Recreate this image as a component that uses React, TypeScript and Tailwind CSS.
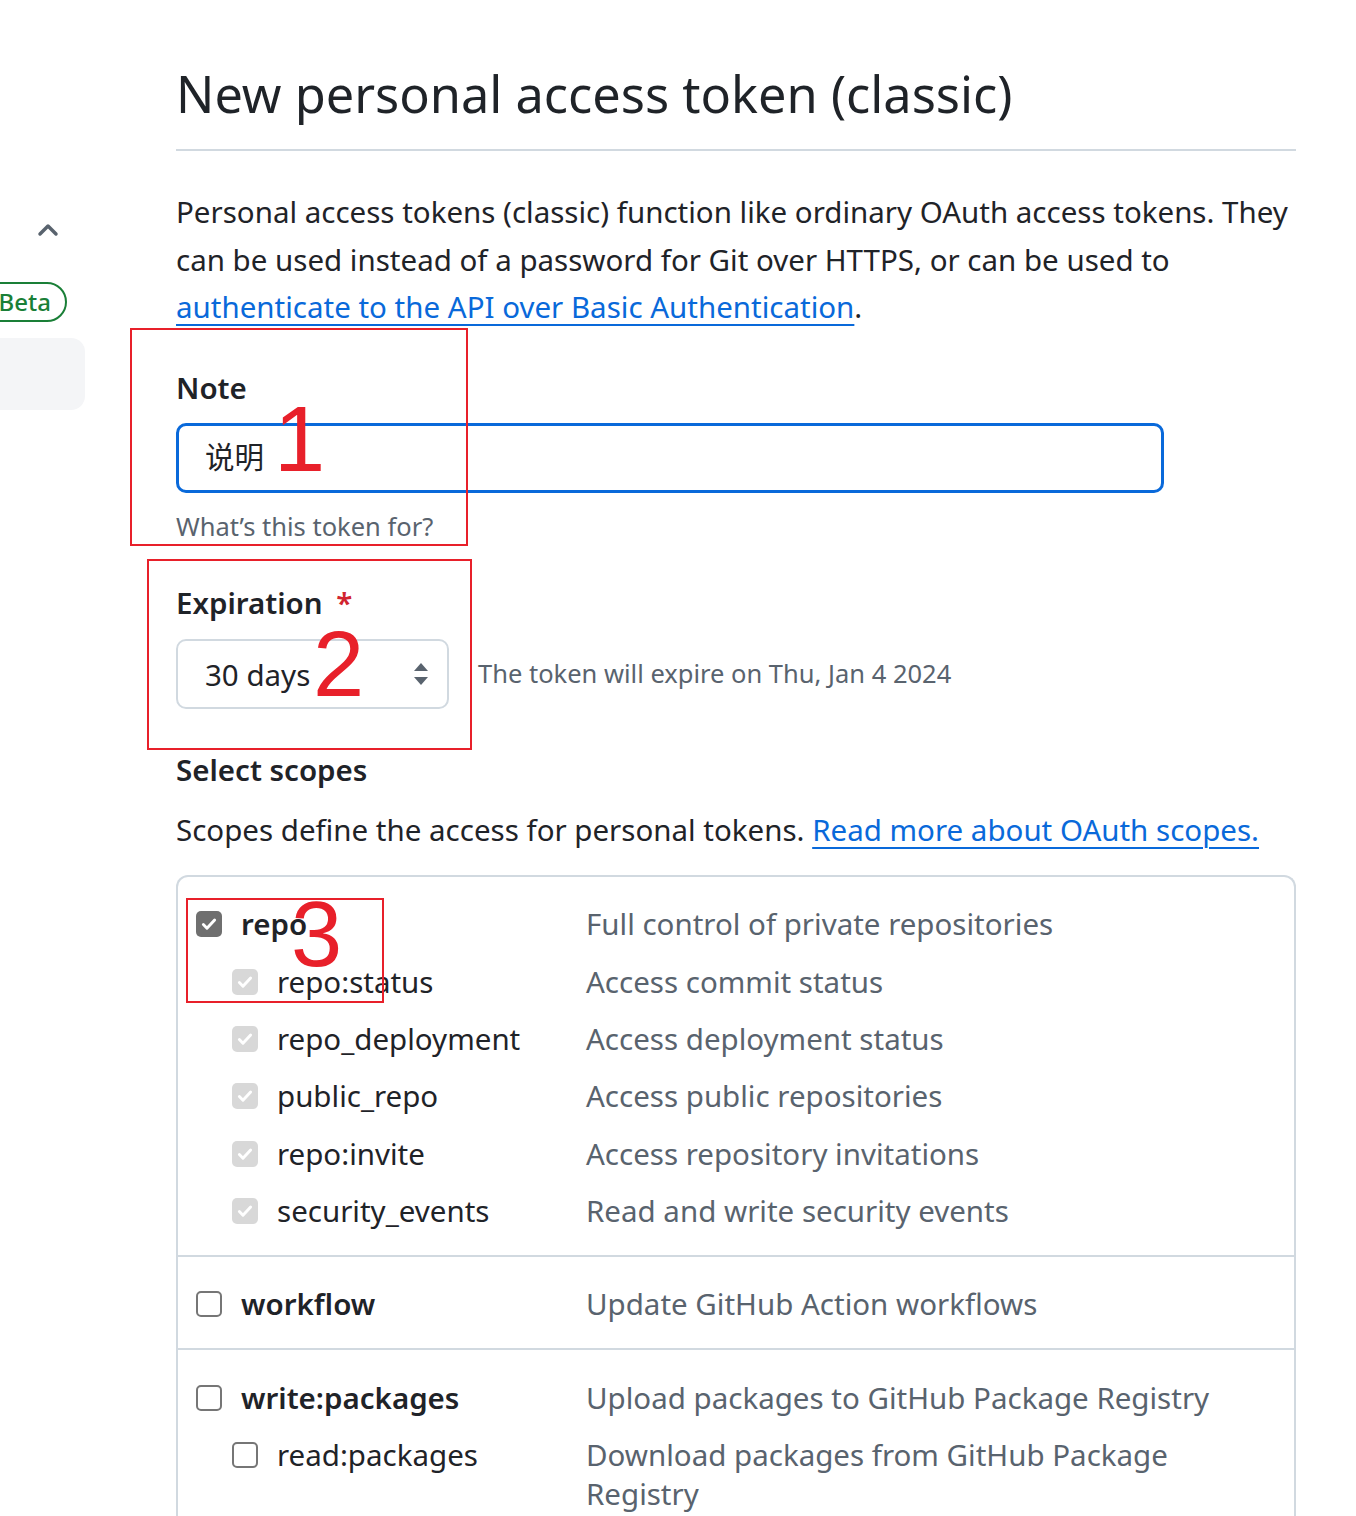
import { ChevronUp } from "lucide-react";

const font = { fontFamily: '"Noto Sans", "Noto Sans CJK SC", sans-serif' };

type Scope = { name: string; desc: string; sub?: boolean; state: "on" | "dim" | "off" };

const groups: Scope[][] = [
  [
    { name: "repo", desc: "Full control of private repositories", state: "on" },
    { name: "repo:status", desc: "Access commit status", sub: true, state: "dim" },
    { name: "repo_deployment", desc: "Access deployment status", sub: true, state: "dim" },
    { name: "public_repo", desc: "Access public repositories", sub: true, state: "dim" },
    { name: "repo:invite", desc: "Access repository invitations", sub: true, state: "dim" },
    { name: "security_events", desc: "Read and write security events", sub: true, state: "dim" },
  ],
  [{ name: "workflow", desc: "Update GitHub Action workflows", state: "off" }],
  [
    { name: "write:packages", desc: "Upload packages to GitHub Package Registry", state: "off" },
    { name: "read:packages", desc: "Download packages from GitHub Package Registry", sub: true, state: "off" },
  ],
];

function Box({ state }: { state: Scope["state"] }) {
  if (state === "off") {
    return <span className="block h-[26px] w-[26px] shrink-0 rounded-[5px] border-2 border-[#767676] bg-white" />;
  }
  return (
    <span
      className={
        "flex h-[26px] w-[26px] shrink-0 items-center justify-center rounded-[5px] " +
        (state === "on" ? "bg-[#6f6f6f]" : "bg-[#d8d8d8]")
      }
    >
      <svg viewBox="0 0 16 16" className="h-[18px] w-[18px]" fill="none" stroke="white" strokeWidth="2.6" strokeLinecap="round" strokeLinejoin="round">
        <path d="M3 8.5l3.2 3.2L13 4.5" />
      </svg>
    </span>
  );
}

function Row({ s }: { s: Scope }) {
  return (
    <div className="flex items-start py-[8.7px] leading-[40px]">
      <div className={"flex h-[40px] w-[408px] shrink-0 items-center " + (s.sub ? "pl-[54px]" : "pl-[18px]")}>
        <Box state={s.state} />
        <span className={"ml-[19px] text-[#1f2328] " + (s.sub ? "" : "font-semibold")}>{s.name}</span>
      </div>
      <div className="w-[690px] leading-[39px] text-[#59636e]">{s.desc}</div>
    </div>
  );
}

export default function App() {
  return (
    <div className="flex min-h-[1516px] w-[1356px] overflow-hidden bg-white text-[29.5px] text-[#1f2328]" style={font}>
      <aside className="w-[85px] shrink-0 overflow-hidden pt-[214px]">
        <div className="flex justify-end pr-[21px]">
          <ChevronUp className="h-[32px] w-[32px] text-[#59636e]" strokeWidth={2.6} />
        </div>
        <div className="mt-[36px] flex w-[67px] justify-end">
          <span className="flex h-[40px] items-center rounded-full border-2 border-[#1a7f37] pl-[30px] pr-[14px] text-[24px] font-medium text-[#1a7f37]">
            Beta
          </span>
        </div>
        <div className="mt-[16px] h-[72px] w-[85px] rounded-r-[14px] bg-[#f4f5f7]" />
      </aside>

      <main className="relative ml-[91px] w-[1120px]">
        <h1 className="border-b-2 border-[#d1d9e0] pb-[25px] pt-[64px] text-[50.5px] leading-[60px] font-normal">
          New personal access token (classic)
        </h1>

        <p className="mt-[37px] leading-[47.5px]">
          Personal access tokens (classic) function like ordinary OAuth access tokens. They can be used instead of a
          password for Git over HTTPS, or can be used to{" "}
          <a className="text-[#0969da] underline decoration-2 underline-offset-[6px]">
            authenticate to the API over Basic Authentication
          </a>
          .
        </p>

        <div className="mt-[37px] font-semibold leading-[40px]">Note</div>
        <div className="mt-[15px] flex h-[70px] w-[988px] items-center rounded-[10px] border-[3px] border-[#0969da] pl-[26px]">
          说明
        </div>
        <div className="mt-[15px] text-[25.5px] leading-[36px] text-[#59636e]">What’s this token for?</div>

        <div className="mt-[39px] font-semibold leading-[40px]">
          Expiration <span className="ml-[6px] text-[#d1242f]">*</span>
        </div>
        <div className="mt-[16px] flex items-center">
          <div className="flex h-[70px] w-[273px] items-center justify-between rounded-[10px] border-2 border-[#d1d9e0] pl-[27px] pr-[18px]">
            <span className="pt-[3px]">30 days</span>
            <svg viewBox="0 0 16 24" className="h-[24px] w-[16px]" fill="#59636e">
              <path d="M8 1l7 8H1zM8 23l7-8H1z" />
            </svg>
          </div>
          <span className="ml-[29px] text-[25.5px] text-[#59636e]">The token will expire on Thu, Jan 4 2024</span>
        </div>

        <div className="mt-[41px] font-semibold leading-[40px]">Select scopes</div>
        <p className="mt-[16px] leading-[47px]">
          Scopes define the access for personal tokens.{" "}
          <a className="text-[#0969da] underline decoration-2 underline-offset-[6px]">Read more about OAuth scopes.</a>
        </p>

        <div className="mt-[22px] rounded-t-[12px] border-2 border-b-0 border-[#d1d9e0]">
          {groups.map((g, i) => (
            <div key={i} className={"pb-[15px] pt-[19px] " + (i > 0 ? "border-t-2 border-[#d1d9e0]" : "")}>
              {g.map((s) => (
                <Row key={s.name} s={s} />
              ))}
            </div>
          ))}
        </div>

        {/* red annotation boxes */}
        <div className="absolute left-[-46px] top-[328px] h-[218px] w-[338px] border-2 border-[#e8202a]" />
        <div className="absolute left-[-29px] top-[559px] h-[191px] w-[325px] border-2 border-[#e8202a]" />
        <div className="absolute left-[10px] top-[898px] h-[105px] w-[198px] border-2 border-[#e8202a]" />
        <span
          className="absolute left-[98px] top-[393px] text-[92px] leading-none text-[#e8202a]"
          style={{ fontFamily: '"Liberation Sans", sans-serif' }}
        >
          1
        </span>
        <span
          className="absolute left-[137px] top-[618px] text-[92px] leading-none text-[#e8202a]"
          style={{ fontFamily: '"Liberation Sans", sans-serif' }}
        >
          2
        </span>
        <span
          className="absolute left-[115px] top-[888px] text-[92px] leading-none text-[#e8202a]"
          style={{ fontFamily: '"Liberation Sans", sans-serif' }}
        >
          3
        </span>
      </main>
    </div>
  );
}
